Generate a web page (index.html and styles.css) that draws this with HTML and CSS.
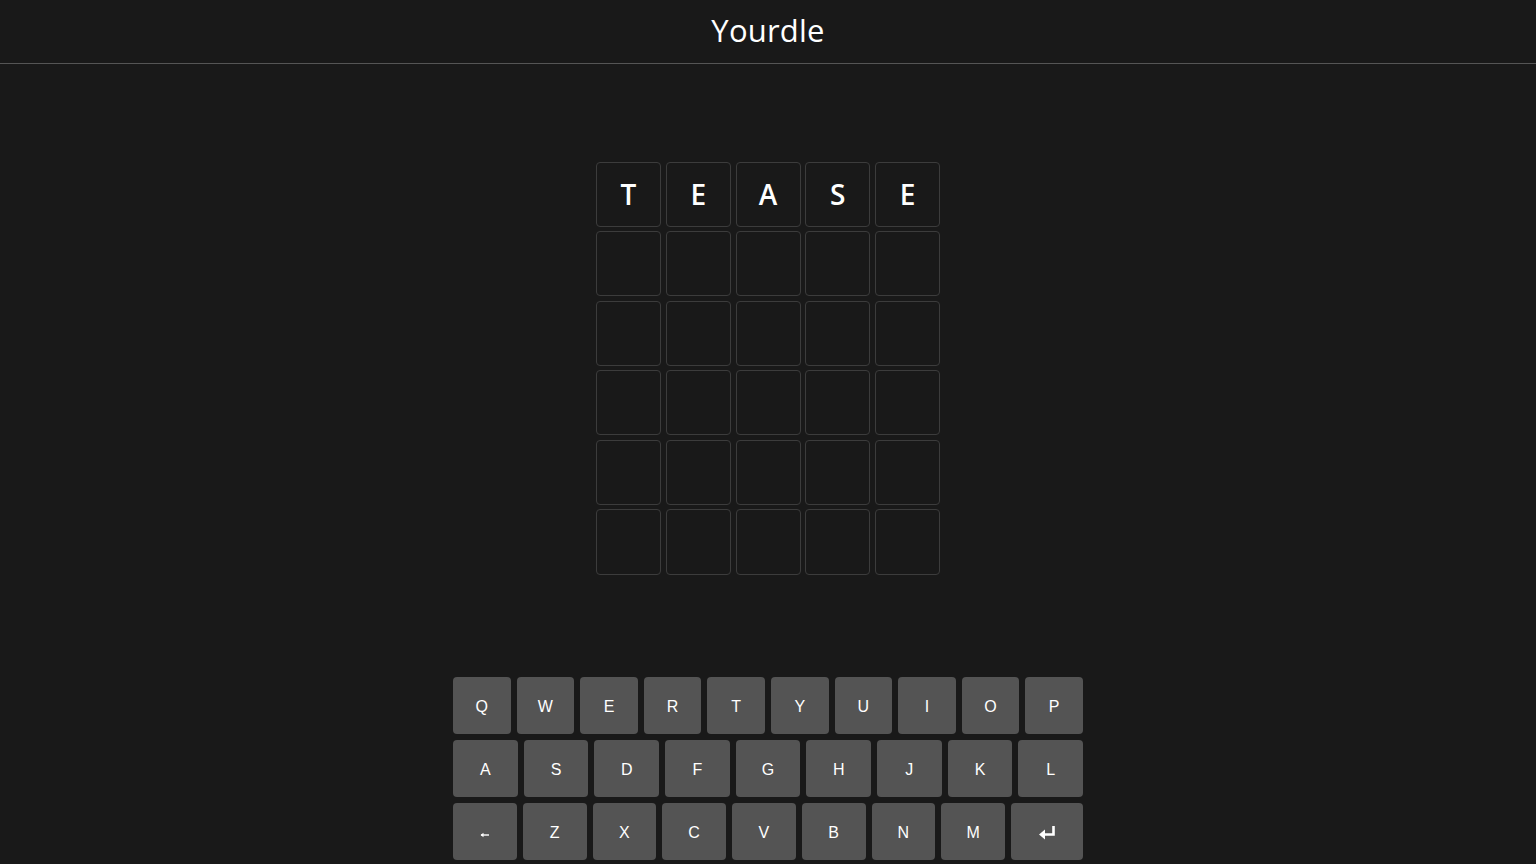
FILE: index.html
```html
<!DOCTYPE html>
<html lang="en">
<head>
<meta charset="utf-8">
<title>Yourdle</title>
<link rel="stylesheet" href="styles.css">
</head>
<body>
<div class="app">
  <header class="header"><h1 class="title">Yourdle</h1></header>
  <main class="board-area">
    <div class="board">
      <div class="tile filled">T</div><div class="tile filled">E</div><div class="tile filled">A</div><div class="tile filled">S</div><div class="tile filled">E</div>
      <div class="tile"></div><div class="tile"></div><div class="tile"></div><div class="tile"></div><div class="tile"></div>
      <div class="tile"></div><div class="tile"></div><div class="tile"></div><div class="tile"></div><div class="tile"></div>
      <div class="tile"></div><div class="tile"></div><div class="tile"></div><div class="tile"></div><div class="tile"></div>
      <div class="tile"></div><div class="tile"></div><div class="tile"></div><div class="tile"></div><div class="tile"></div>
      <div class="tile"></div><div class="tile"></div><div class="tile"></div><div class="tile"></div><div class="tile"></div>
    </div>
  </main>
  <div class="keyboard">
    <div class="krow">
      <button class="key">Q</button><button class="key">W</button><button class="key">E</button><button class="key">R</button><button class="key">T</button><button class="key">Y</button><button class="key">U</button><button class="key">I</button><button class="key">O</button><button class="key">P</button>
    </div>
    <div class="krow">
      <button class="key">A</button><button class="key">S</button><button class="key">D</button><button class="key">F</button><button class="key">G</button><button class="key">H</button><button class="key">J</button><button class="key">K</button><button class="key">L</button>
    </div>
    <div class="krow">
      <button class="key" aria-label="Backspace"><svg class="bs-icon" width="10" height="6" viewBox="0 0 10 6"><path d="M1 3H9" stroke="#fff" stroke-width="1.4"/><path d="M0.5 3L3.5 0.8V5.2Z" fill="#fff"/></svg></button>
      <button class="key">Z</button><button class="key">X</button><button class="key">C</button><button class="key">V</button><button class="key">B</button><button class="key">N</button><button class="key">M</button>
      <button class="key enter" aria-label="Enter"><svg width="18" height="16" viewBox="0 0 18 16"><path d="M15.5 1V9.5H6" fill="none" stroke="#fff" stroke-width="2.6"/><path d="M1 9.5L7 4.5V14.5Z" fill="#fff"/></svg></button>
    </div>
  </div>
</div>
</body>
</html>
```

FILE: styles.css
```css
* { box-sizing: border-box; }
html, body { margin: 0; padding: 0; height: 100%; }
body {
  background: #191919;
  color: #fff;
  font-family: "Liberation Sans", Arial, sans-serif;
}
.app {
  height: 100vh;
  display: flex;
  flex-direction: column;
}
.header {
  height: 64px;
  border-bottom: 1px solid #555;
  display: flex;
  align-items: center;
  justify-content: center;
  flex: 0 0 auto;
}
.title {
  margin: 0;
  font-family: "Open Sans", "Noto Sans", sans-serif;
  font-weight: 400;
  font-size: 31px;
  letter-spacing: 0.2px;
  line-height: 1;
  padding-bottom: 2px;
}
.board-area {
  flex: 1;
  display: flex;
  align-items: center;
  justify-content: center;
  padding-bottom: 5px;
}
.board {
  width: 344px;
  height: 413px;
  display: grid;
  grid-template-columns: repeat(5, 1fr);
  grid-template-rows: repeat(6, 1fr);
  gap: 4.5px 4.75px;
}
.tile {
  border: 1px solid #3c3c3c;
  border-radius: 4px;
  display: flex;
  align-items: center;
  justify-content: center;
  font-family: "Open Sans", "Noto Sans", sans-serif;
  font-weight: 600;
  font-size: 28px;
  color: #fff;
}
.keyboard {
  width: 630px;
  margin: 0 auto;
  padding-bottom: 4px;
  display: flex;
  flex-direction: column;
  gap: 6px;
}
.krow {
  display: flex;
  gap: 6px;
}
.key {
  flex: 1 1 0;
  height: 57px;
  border: 0;
  border-radius: 4px;
  background: #545454;
  color: #fff;
  font-family: "Liberation Sans", Arial, sans-serif;
  font-size: 16px;
  display: flex;
  align-items: center;
  justify-content: center;
  padding: 3px 0 0;
}
.key.enter { flex: 0 0 72px; }
.bs-icon { margin-top: 3px; }
```
